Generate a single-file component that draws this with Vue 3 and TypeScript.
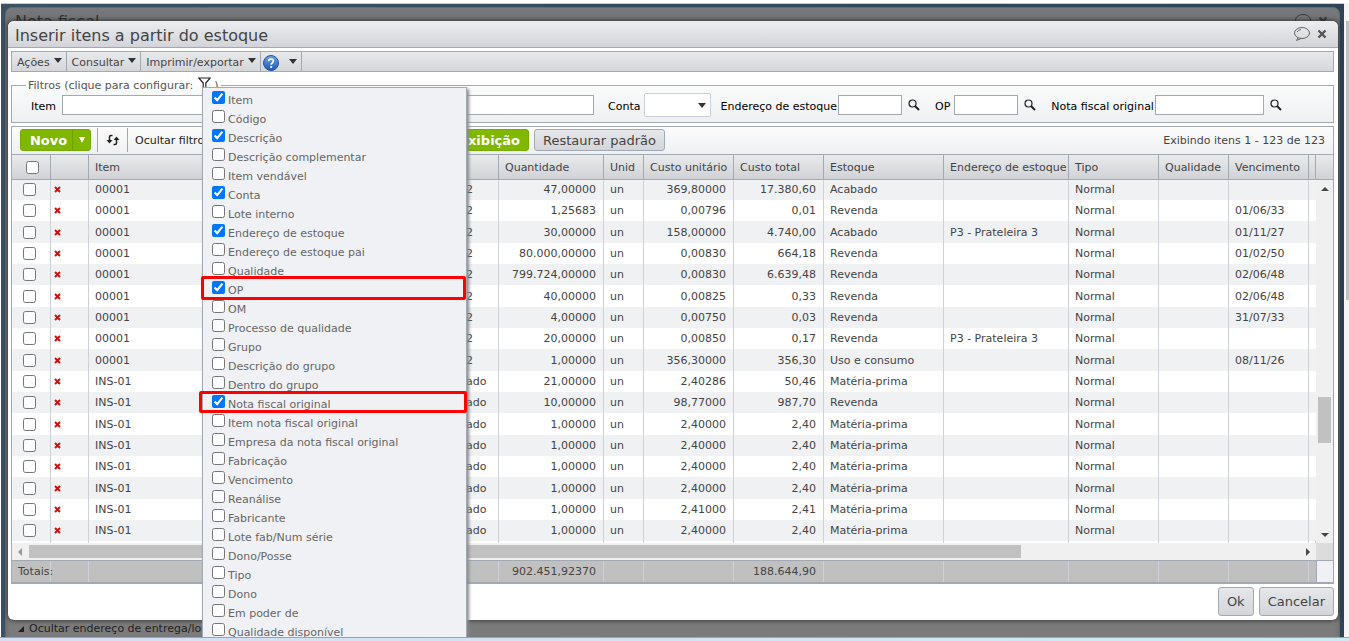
<script setup lang="ts">
import { ref } from 'vue'

interface Column { label: string; width: number; right?: boolean }
interface Option { label: string; on?: boolean; mark?: 'a' | 'b' }

const columns: Column[] = [
  { label: 'Item', width: 371 },
  { label: '', width: 39 },
  { label: 'Quantidade', width: 105, right: true },
  { label: 'Unid', width: 40 },
  { label: 'Custo unitário', width: 90, right: true },
  { label: 'Custo total', width: 90, right: true },
  { label: 'Estoque', width: 120 },
  { label: 'Endereço de estoque', width: 125 },
  { label: 'Tipo', width: 90 },
  { label: 'Qualidade', width: 70 },
  { label: 'Vencimento', width: 80 },
]

const shelf = 'P3 - Prateleira 3'
const raw: string[][] = [
  ['00001', '2', '47,00000', '369,80000', '17.380,60', 'Acabado', '', ''],
  ['00001', '2', '1,25683', '0,00796', '0,01', 'Revenda', '', '01/06/33'],
  ['00001', '2', '30,00000', '158,00000', '4.740,00', 'Acabado', shelf, '01/11/27'],
  ['00001', '2', '80.000,00000', '0,00830', '664,18', 'Revenda', '', '01/02/50'],
  ['00001', '2', '799.724,00000', '0,00830', '6.639,48', 'Revenda', '', '02/06/48'],
  ['00001', '2', '40,00000', '0,00825', '0,33', 'Revenda', '', '02/06/48'],
  ['00001', '2', '4,00000', '0,00750', '0,03', 'Revenda', '', '31/07/33'],
  ['00001', '2', '20,00000', '0,00850', '0,17', 'Revenda', shelf, ''],
  ['00001', '2', '1,00000', '356,30000', '356,30', 'Uso e consumo', '', '08/11/26'],
  ['INS-01', 'ado', '21,00000', '2,40286', '50,46', 'Matéria-prima', '', ''],
  ['INS-01', 'ado', '10,00000', '98,77000', '987,70', 'Revenda', '', ''],
  ['INS-01', 'ado', '1,00000', '2,40000', '2,40', 'Matéria-prima', '', ''],
  ['INS-01', 'ado', '1,00000', '2,40000', '2,40', 'Matéria-prima', '', ''],
  ['INS-01', 'ado', '1,00000', '2,40000', '2,40', 'Matéria-prima', '', ''],
  ['INS-01', 'ado', '1,00000', '2,40000', '2,40', 'Matéria-prima', '', ''],
  ['INS-01', 'ado', '1,00000', '2,41000', '2,41', 'Matéria-prima', '', ''],
  ['INS-01', 'ado', '1,00000', '2,40000', '2,40', 'Matéria-prima', '', ''],
]
const rows = raw.map(r => [r[0], r[1], r[2], 'un', r[3], r[4], r[5], r[6], 'Normal', '', r[7]])
const totals = ['', '', '902.451,92370', '', '', '188.644,90', '', '', '', '', '']

const options = ref<Option[]>([
  { label: 'Item', on: true },
  { label: 'Código' },
  { label: 'Descrição', on: true },
  { label: 'Descrição complementar' },
  { label: 'Item vendável' },
  { label: 'Conta', on: true },
  { label: 'Lote interno' },
  { label: 'Endereço de estoque', on: true },
  { label: 'Endereço de estoque pai' },
  { label: 'Qualidade' },
  { label: 'OP', on: true, mark: 'a' },
  { label: 'OM' },
  { label: 'Processo de qualidade' },
  { label: 'Grupo' },
  { label: 'Descrição do grupo' },
  { label: 'Dentro do grupo' },
  { label: 'Nota fiscal original', on: true, mark: 'b' },
  { label: 'Item nota fiscal original' },
  { label: 'Empresa da nota fiscal original' },
  { label: 'Fabricação' },
  { label: 'Vencimento' },
  { label: 'Reanálise' },
  { label: 'Fabricante' },
  { label: 'Lote fab/Num série' },
  { label: 'Dono/Posse' },
  { label: 'Tipo' },
  { label: 'Dono' },
  { label: 'Em poder de' },
  { label: 'Qualidade disponível' },
])
</script>

<template>
  <div class="page">
    <div class="stage">
      <section class="back">
        <header class="backbar">
          <span>Nota fiscal</span>
          <span class="winicons">
            <svg width="18" height="16" viewBox="0 0 18 16"><ellipse cx="9" cy="7" rx="7.5" ry="5.5" /><path d="M5 12 3.500 14.500 8 12.500" /></svg>
            <svg width="10" height="10" viewBox="0 0 10 10"><path class="x" d="M1.500 1.500 8.500 8.500M8.500 1.500 1.500 8.500" /></svg>
          </span>
        </header>
        <a class="backlink" href="#"><span class="tri"></span>Ocultar endereço de entrega/local</a>
      </section>

      <section class="modal">
        <header class="title">
          <h1>Inserir itens a partir do estoque</h1>
          <span class="winicons">
            <button class="bare" aria-label="Comentário">
              <svg width="18" height="16" viewBox="0 0 18 16"><ellipse cx="9" cy="7" rx="7.500" ry="5.500" /><path d="M5 12 3.500 14.500 8 12.500M4 6Q5 4 8 3.500" /></svg>
            </button>
            <button class="bare" aria-label="Fechar">
              <svg width="10" height="10" viewBox="0 0 10 10"><path class="x" d="M1.500 1.500 8.500 8.500M8.500 1.500 1.500 8.500" /></svg>
            </button>
          </span>
        </header>

        <nav class="menu">
          <button>Ações<i class="caret"></i></button>
          <button>Consultar<i class="caret"></i></button>
          <button>Imprimir/exportar<i class="caret"></i></button>
          <button class="help" aria-label="Ajuda">
            <svg width="16" height="16" viewBox="0 0 16 16">
              <defs><linearGradient id="hg" x1="0" y1="0" x2="0" y2="1"><stop offset="0" stop-color="#6fa5e6" /><stop offset="1" stop-color="#1c58b4" /></linearGradient></defs>
              <circle cx="8" cy="8" r="7.500" fill="url(#hg)" stroke="#1f55a5" />
              <path d="M5.700 6.200C5.700 3.300 10.400 3.300 10.400 6.100 10.400 7.800 8.200 7.900 8.200 9.700" fill="none" stroke="#fff" stroke-width="1.700" />
              <circle cx="8.200" cy="12" r="1.100" fill="#fff" />
            </svg>
            <i class="caret"></i>
          </button>
        </nav>

        <fieldset class="filters">
          <legend>Filtros (clique para configurar:
            <svg width="13" height="13" viewBox="0 0 13 13"><path d="M.8 1H12.200L7.800 6V11.500L5.200 12.500V6Z" /></svg> )
          </legend>
          <label class="f-item" for="f1">Item</label><input id="f1" class="wide" type="text">
          <label class="f-conta" for="f2">Conta</label>
          <span class="sel"><select id="f2"><option></option></select><i class="caret"></i></span>
          <label class="f-end" for="f3">Endereço de estoque</label><input id="f3" class="w64" type="text">
          <svg class="lens" width="12" height="12" viewBox="0 0 12 12"><circle cx="4.500" cy="4.500" r="3.500" /><path d="m7 7 4 4" /></svg>
          <label class="f-op" for="f4">OP</label><input id="f4" class="w64" type="text">
          <svg class="lens" width="12" height="12" viewBox="0 0 12 12"><circle cx="4.500" cy="4.500" r="3.500" /><path d="m7 7 4 4" /></svg>
          <label class="f-nota" for="f5">Nota fiscal original</label><input id="f5" class="w109" type="text">
          <svg class="lens" width="12" height="12" viewBox="0 0 12 12"><circle cx="4.500" cy="4.500" r="3.500" /><path d="m7 7 4 4" /></svg>
        </fieldset>

        <section class="gridbox">
          <div class="tools">
            <div class="split"><button>Novo</button><button class="drop" aria-label="Mais opções"><i></i></button></div>
            <button class="refresh" aria-label="Atualizar">
              <svg width="16" height="12" viewBox="0 0 16 12"><path class="ln" d="M7.500 1.500H6Q4.500 1.500 4.500 3V8M8.500 10.500H10Q11.500 10.500 11.500 9V4" /><path class="hd" d="M1.500 6H7.500L4.500 9.500ZM8.500 6H14.500L11.500 2.500Z" /></svg>
            </button>
            <button class="plain">Ocultar filtros</button>
            <button class="green">xibição</button>
            <button class="gray">Restaurar padrão</button>
            <span class="count">Exibindo itens 1 - 123 de 123</span>
          </div>

          <div class="clip">
            <table class="grid">
              <colgroup>
                <col class="c-check"><col class="c-del">
                <col v-for="(c, i) in columns" :key="i" :style="{ width: c.width + 'px' }">
                <col>
              </colgroup>
              <thead>
                <tr>
                  <th class="hc"><input type="checkbox" aria-label="Selecionar todos"></th>
                  <th></th>
                  <th v-for="(c, i) in columns" :key="i">{{ c.label }}</th>
                  <th class="tail"></th>
                </tr>
              </thead>
              <tbody>
                <tr v-for="(r, i) in rows" :key="i">
                  <td class="cb"><input type="checkbox" :aria-label="'Selecionar linha ' + (i + 1)"></td>
                  <td class="dl">
                    <button class="bare" aria-label="Excluir"><svg width="7" height="7" viewBox="0 0 7 7"><path d="M1 1 6 6M6 1 1 6" /></svg></button>
                  </td>
                  <td v-for="(v, j) in r" :key="j" :class="{ num: columns[j].right }">{{ v }}</td>
                  <td class="tail"></td>
                </tr>
                <tr class="rest"><td v-for="n in 14" :key="n"></td></tr>
              </tbody>
            </table>
            <div class="vbar"><i class="up"></i><i class="thumb"></i><i class="down"></i></div>
          </div>
          <div class="hbar"><i class="lt"></i><i class="track"><i></i></i><i class="rt"></i><i class="corner"></i></div>
          <div class="clip sum">
            <table class="grid">
              <colgroup>
                <col class="c-check"><col class="c-del">
                <col v-for="(c, i) in columns" :key="i" :style="{ width: c.width + 'px' }">
                <col>
              </colgroup>
              <tbody>
                <tr>
                  <td class="tot">Totais:</td><td></td>
                  <td v-for="(v, j) in totals" :key="j" :class="{ num: columns[j].right }">{{ v }}</td>
                  <td class="tail"></td>
                </tr>
              </tbody>
            </table>
            <div class="end"></div>
          </div>
        </section>

        <footer class="actions"><button class="gray">Ok</button><button class="gray">Cancelar</button></footer>
      </section>

      <div class="popup">
        <label v-for="o in options" :key="o.label" :class="o.mark && ['mark', o.mark]">
          <input v-model="o.on" type="checkbox"><span>{{ o.label }}</span>
        </label>
      </div>
    </div>
    <aside class="pagebar"><i></i></aside>
    <div class="bottom"></div>
  </div>
</template>

<style>
html, body { height: 100%; overflow: hidden; }
#app { height: 100%; }
</style>

<style scoped>
.page {
  position: relative; box-sizing: border-box; height: 100vh; min-height: 600px; overflow: hidden;
  display: grid; grid-template: 1fr 4px / 1fr 5px; padding: 3px 0 0 1px; background: #fff;
  font: 11px/15px Verdana, "DejaVu Sans", sans-serif; color: #444;
}
.page *, .page *::before { box-sizing: border-box; }
button, input, select { font: inherit; color: inherit; margin: 0; }
button { padding: 0; border: 0; background: none; white-space: nowrap; }
input[type='checkbox'] { width: 13px; height: 13px; display: block; flex: none; }
.stage { position: relative; overflow: hidden; border-top: 1px solid #c8cbd0; background: linear-gradient(90deg, #3b5164, #2d4357); }
.back {
  position: absolute; inset: 3px 4px -10px 4px; border-radius: 7px; background: #7b7b7b;
  display: flex; flex-direction: column; justify-content: space-between; border: 1px solid #66696b;
  box-shadow: inset 0 0 5px #666;
}
.backbar { display: flex; align-items: flex-start; justify-content: space-between; padding: 5px 11px 0 9px; font-size: 16px; line-height: 18px; color: #333; background: linear-gradient(#777a7c, #6a6b6d); border-radius: 6px 6px 0 0; }
.backbar .winicons svg { stroke: #3a3a3a; }
.backlink { display: flex; align-items: center; gap: 5px; padding: 0 0 10px 12px; color: #222; text-decoration: none; line-height: 15px; }
.tri { border-left: 6px solid transparent; border-bottom: 6px solid #222; }
.winicons { display: flex; align-items: center; gap: 6px; }
.winicons svg { display: block; fill: none; stroke: #666; }
.winicons .x { stroke: #555; stroke-width: 2.4; }
.backbar .winicons .x { stroke: #3a3a3a; }
.modal {
  position: absolute; inset: 17px 6px 17px 7px; display: flex; flex-direction: column;
  background: #fff; border-radius: 6px; box-shadow: 0 0 5px #222;
}
.title {
  height: 27px; flex: none; display: flex; align-items: center; justify-content: space-between;
  padding: 0 11px 0 7px; border-bottom: 1px solid #a3a9b3; border-radius: 6px 6px 0 0; background: linear-gradient(#ecedef, #d2d4d9);
}
h1 { margin: 0; font-size: 16px; line-height: 22px; font-weight: normal; padding-top: 4px; color: #444; }
.menu { display: flex; flex: none; height: 21px; margin: 3px 4px 0 3px; border: 1px solid #a3a9b3; background: linear-gradient(#e8e9eb, #d4d6da); }
.menu button { display: flex; align-items: center; gap: 4px; padding: 1px 4px 0 5px; border-right: 1px solid #a3a9b3; color: #444; }
.menu .help { gap: 10px; padding: 2px 4px 0 2px; }
.caret { display: block; border: 4px solid transparent; border-top: 5px solid #333; border-bottom: 0; }
.menu .caret { margin-top: -3px; }
.filters {
  display: flex; align-items: center; min-width: 0; height: 46px; margin: 5px 4px 0 3px; padding: 0 0 0 19px;
  border: 1px solid #a3a9b3; background: linear-gradient(#fafbfb, #eff0f2); color: #000; flex: none;
}
.filters legend { margin-left: -5px; padding: 0 2px; line-height: 15px; color: #555; }
legend svg { vertical-align: -1px; margin-left: 1px; fill: #fff; stroke: #222; stroke-width: 1.2; }
.filters label { white-space: nowrap; padding-top: 2px; }
.filters input { height: 20px; border: 1px solid #a3a9b3; background: #fff; }
.wide { width: 532px; margin-left: 6px; }
.w64 { width: 64px; margin-left: 1px; }
.w109 { width: 109px; margin-left: 1px; }
.f-conta { margin-left: 14px; }
.f-end { margin-left: 9px; }
.f-op { margin: 0 3px 0 15px; }
.f-nota { margin-left: 15px; }
.sel { position: relative; margin-left: 4px; }
.sel select { display: block; appearance: none; width: 67px; height: 24px; border: 1px solid #ccd0d8; border-radius: 2px; background: #fff; }
.sel .caret { position: absolute; right: 5px; top: 10px; }
.lens { margin-left: 6px; fill: none; stroke: #222; stroke-width: 1.2; }
.lens path { stroke-width: 2; }
.gridbox { display: flex; flex-direction: column; flex: none; margin: 3px 4px 0 3px; border: 1px solid #a3a9b3; border-bottom-width: 2px; }
.tools { display: flex; align-items: center; height: 28px; padding: 0 8px 1px; border-bottom: 1px solid #a3a9b3; background: linear-gradient(#fcfcfc, #eff0f2); }
.split { display: flex; height: 22px; border: 1px solid #75ab00; border-radius: 3px; background: #80b800; color: #fff; }
.split button, .green { font-size: 13px; font-weight: bold; color: #fff; }
.split button:first-child { width: 51px; padding-left: 4px; }
.split .drop { width: 18px; border-left: 1px solid #70a200; }
.drop i { display: block; margin: auto; width: 6px; border: 3px solid transparent; border-top: 6px solid #fff; border-bottom: 0; }
.refresh { height: 24px; width: 31px; margin-left: 6px; border: solid #a3a9b3; border-width: 0 1px; display: grid; place-items: center; }
.refresh .ln { fill: none; stroke: #222; stroke-width: 1.5; }
.refresh .hd { fill: #222; }
.plain { width: 278px; margin-left: 7px; text-align: left; color: #222; }
.green { width: 116px; height: 22px; padding-right: 8px; text-align: right; border: 1px solid #75ab00; border-radius: 3px; background: #80b800; }
.gray { border: 1px solid #a3a9b3; border-radius: 3px; background: linear-gradient(#e6e7ea, #d3d5da); font-size: 13px; color: #444; }
.tools .gray { width: 131px; height: 22px; margin-left: 5px; }
.count { margin-left: auto; color: #444; white-space: nowrap; }
.clip { display: grid; grid-template-columns: minmax(0, 1fr) 17px; overflow: hidden; }
.grid { table-layout: fixed; width: 100%; border-collapse: separate; border-spacing: 0; }
.c-check { width: 39px; }
.c-del { width: 38px; }
th { height: 25px; padding: 0 6px; text-align: left; font-weight: normal; border-right: 1px solid #a3a9b3; border-bottom: 1px solid #a3a9b3; background: linear-gradient(#e9eaeb, #d0d2d6); white-space: nowrap; }
td { height: 21px; padding: 0 6px; border-right: 1px solid #ced1d6; white-space: nowrap; line-height: 15px; }
th.hc { padding-left: 14px; }
td.cb { padding-left: 11px; }
td.dl { padding-left: 3px; }
.tail { padding: 0; }
td.tail { border-right: 0; }
tbody tr:nth-child(odd) td { background: #f0f1f3; }
tbody tr:nth-child(3n) td { height: 22px; }
tbody tr:first-child td { height: 20px; padding-bottom: 2px; }
tbody tr.rest td { height: 2px; background: #fff; }
td.num { text-align: right; padding-right: 7px; }
.bare { display: block; }
.dl svg { display: block; stroke: #c11; stroke-width: 2; }
.vbar { display: flex; flex-direction: column; align-items: center; padding-top: 32px; background: linear-gradient(#e9eaeb, #d0d2d6 24px, #a3a9b3 24px, #a3a9b3 25px, #f0f0f0 25px); }
.up { border: 4px solid transparent; border-top: 0; border-bottom-color: #444; }
.vbar .thumb { margin-top: 206px; width: 13px; height: 46px; background: #c1c1c1; }
.down { margin: auto 0 6px; border: 4px solid transparent; border-bottom: 0; border-top-color: #444; }
.hbar { display: flex; align-items: center; height: 18px; border-bottom: 1px solid #a3a9b3; background: #f0f0f0; }
.lt { margin-left: 6px; border: 4px solid transparent; border-left: 0; border-right-color: #999; }
.track { flex: 1; margin: 0 0 0 7px; }
.track i { display: block; width: 77.7%; height: 13px; background: #c1c1c1; }
.rt { margin-right: 6px; border: 4px solid transparent; border-right: 0; border-left-color: #444; }
.corner { width: 17px; height: 17px; background: #dcdcdc; }
.sum { background: #c0c0c0; }
.sum tbody tr:first-child td { height: 21px; padding-bottom: 0; background: #c0c0c0; }
.end { border-left: 1px solid #a3a9b3; background: #f0f1f5; }
.actions { display: flex; justify-content: flex-end; gap: 5px; padding: 3px 4px 0 0; }
.actions .gray { height: 29px; padding: 0 8px; }
.popup {
  position: absolute; left: 201px; top: 83px; bottom: 0; width: 265px; padding: 3px 9px;
  border: 1px solid #a3a9b3; border-bottom: 0; background: #f0f1f4; box-shadow: 2px 2px 3px #888; color: #666;
  clip-path: inset(0 -6px 0 -6px);
}
.popup label { position: relative; display: flex; align-items: flex-start; gap: 3px; height: 19px; }
.popup label span { padding-top: 2px; line-height: 15px; }
.mark::before { content: ''; position: absolute; inset: -5px -9px 0 -11px; border: 3px solid #f00; border-radius: 2px; }
.mark.b::before { inset: -4px -10px 1px -13px; }
.pagebar { padding-top: 18px; background: #f5f5f5; }
.pagebar i { display: block; width: 3px; height: 279px; margin-left: 2px; background: #c1c1c1; }
.bottom { grid-column: 1 / -1; margin-left: -1px; border-top: 1px solid #9aa3b5; background: linear-gradient(90deg, #d6dff5, #cbe9f5); }
</style>
